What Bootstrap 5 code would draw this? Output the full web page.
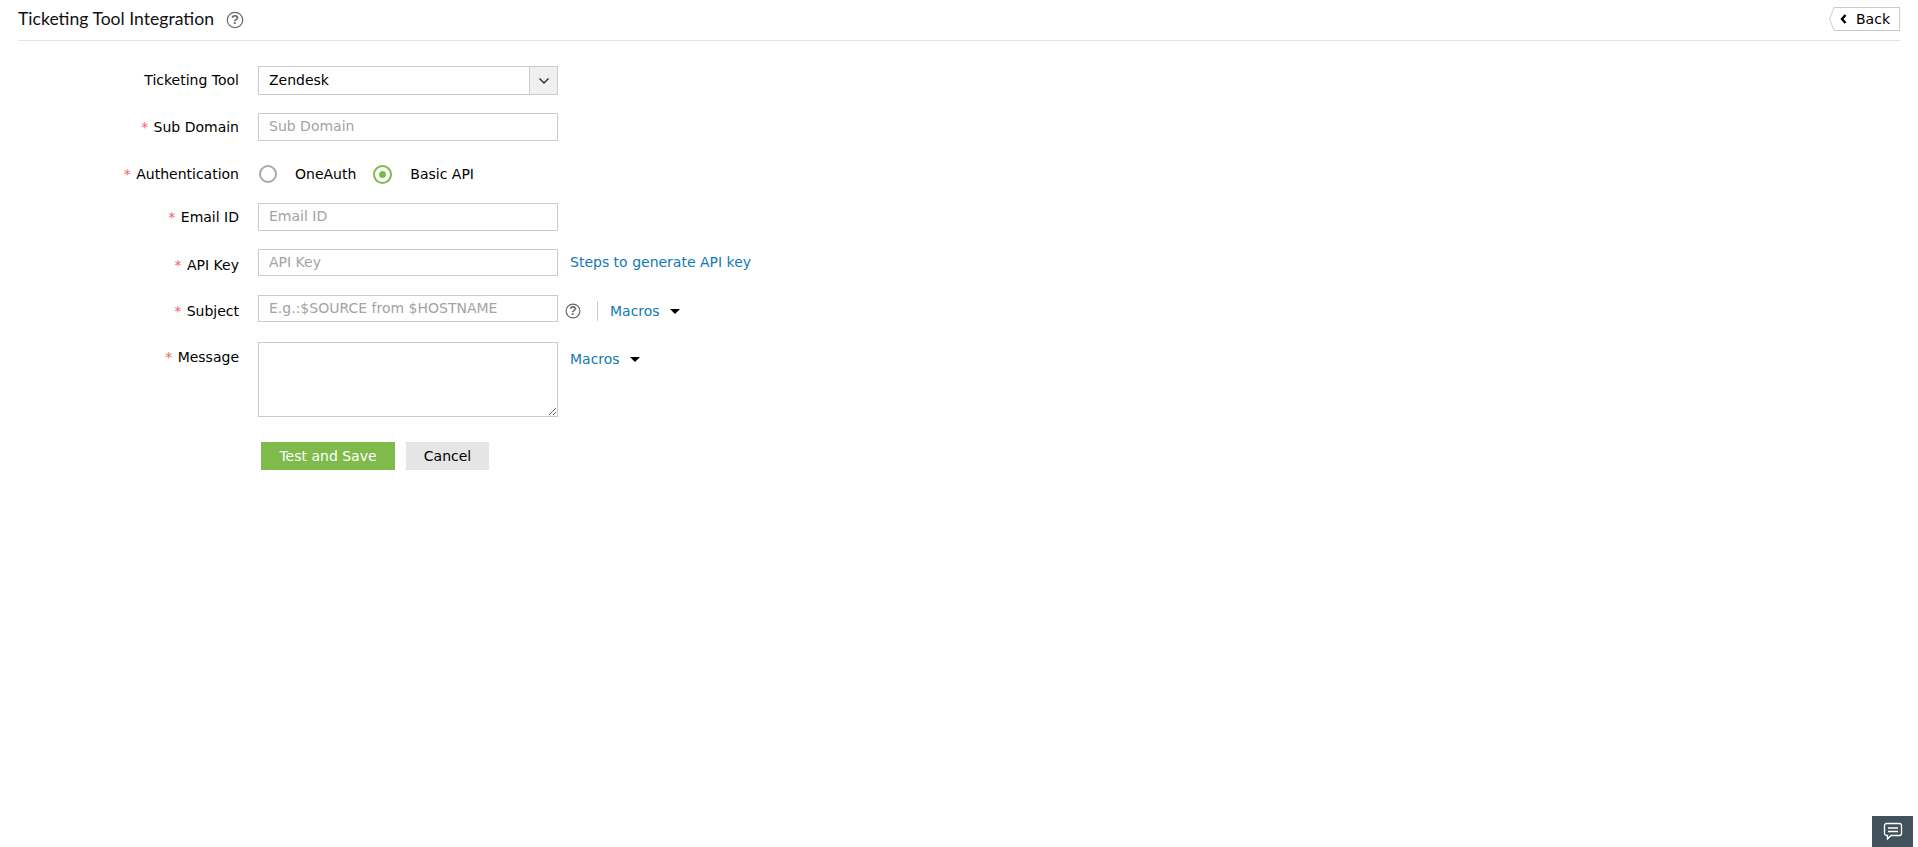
<!DOCTYPE html>
<html lang="en">
<head>
<meta charset="utf-8">
<title>Ticketing Tool Integration</title>
<link href="https://cdn.jsdelivr.net/npm/bootstrap@5.3.0/dist/css/bootstrap.min.css" rel="stylesheet">
<style>
html,body{height:100%;}
body{font-family:"DejaVu Sans",sans-serif;font-size:14px;color:#000;background:#fff;overflow:hidden;}
.page-wrap{padding:0 18px;height:847px;position:relative;}
.head-bar{height:41px;width:1882px;border-bottom:1px solid #e3e3e3;}
.head-title{font-family:Lato,sans-serif;font-size:17.6px;line-height:1;color:#111;margin-top:-3px;}
.help-ico{display:block;flex:none;}
.back-btn{position:relative;height:24px;width:66px;margin:-3px 0 0;border:1px solid #ccc;border-left:0;background:#fff;color:#000;font-size:14px;line-height:22px;padding:0 0 0 22px;border-radius:0;text-align:left;}
.back-btn .tip{position:absolute;left:-5px;top:-1px;}
.back-btn .chev{position:absolute;left:6px;top:6px;}
.form-zone{padding-top:25px;}
.frow{display:flex;align-items:flex-start;}
.frow.slim{height:27px;}
.flabel{width:221px;text-align:right;margin-right:19px;flex:none;line-height:27px;white-space:nowrap;padding-top:1px;}
.flabel.lower{line-height:26px;padding-top:3px;}
.flabel.mid{line-height:26px;padding-top:2px;}
.flabel i{color:#f0606a;font-style:normal;margin-right:1px;}
.ctl.form-control{width:300px;height:28px;flex:none;border:1.5px solid #ccc;border-radius:0;padding:0 10px 3px;font-size:14px;color:#000;box-shadow:none;}
.ctl.form-control.lean{height:27px;padding-bottom:2px;}
.ctl.form-control::placeholder{color:#a3a3a3;opacity:1;}
textarea.ctl.form-control{height:75px;padding:4px 10px;display:block;}
.sel-box{width:300px;height:29px;border:1.5px solid #ccc;display:flex;align-items:stretch;}
.sel-val{flex:1;padding-left:10px;line-height:27px;}
.sel-arrow{width:28px;background:#f0f0f0;border-left:1px solid #ccc;display:flex;align-items:center;justify-content:center;}
.radio-row{height:28px;display:flex;align-items:center;padding-left:1px;}
.radio-dot{width:18px;height:18px;border-radius:50%;border:2px solid #a9a9a9;display:inline-block;flex:none;}
.radio-dot.on{width:19px;height:19px;border-color:#7fbb4a;position:relative;}
.radio-dot.on::after{content:"";position:absolute;left:4px;top:4px;width:7px;height:7px;background:#7fbb4a;border-radius:50%;}
.tl{color:#1279b8;text-decoration:none;white-space:nowrap;}
.caret-ico{width:0;height:0;border-left:5px solid transparent;border-right:5px solid transparent;border-top:5px solid #000;display:inline-block;}
.vsep{width:1px;height:20px;background:#ccc;display:inline-block;}
.btn-save.btn{background:#7fbb4a;border:0;border-radius:0;color:#fff;width:134px;height:28px;padding:0;font-size:14px;}
.btn-cancel.btn{background:#e5e5e5;border:0;border-radius:0;color:#000;width:83px;height:28px;padding:0;font-size:14px;}
.chat-tab{position:absolute;right:5px;bottom:0;width:41px;height:31px;background:#42525c;display:flex;align-items:center;justify-content:center;}
</style>
</head>
<body>
<div class="page-wrap">
  <div class="head-bar d-flex align-items-center justify-content-between">
    <div class="d-flex align-items-center gap-2">
      <div class="head-title">Ticketing Tool Integration</div>
      <svg class="help-ico ms-1" width="18" height="18" viewBox="0 0 18 18" style="margin-top:-1px"><circle cx="9" cy="9" r="7.7" fill="none" stroke="#666" stroke-width="1.2"/><text x="9" y="13.400" text-anchor="middle" font-family="Liberation Sans" font-size="13" font-weight="700" fill="#666">?</text></svg>
    </div>
    <button type="button" class="btn back-btn">
      <svg class="tip" width="6" height="24" viewBox="0 0 6 24"><path d="M6 .5H5L.6 12 5 23.5h1" fill="#fff" stroke="#ccc"/></svg>
      <svg class="chev" width="7" height="10" viewBox="0 0 7 10"><path d="M5.500 1 2 5l3.500 4" fill="none" stroke="#000" stroke-width="2.400"/></svg>
      Back
    </button>
  </div>
  <form class="form-zone" onsubmit="return false">
    <div class="frow" style="margin-bottom:18px">
      <label class="flabel">Ticketing Tool</label>
      <div class="sel-box"><span class="sel-val">Zendesk</span><span class="sel-arrow"><svg width="12" height="8" viewBox="0 0 12 8"><path d="M1.500 1.500 6 6l4.500-4.500" fill="none" stroke="#333" stroke-width="1.500"/></svg></span></div>
    </div>
    <div class="frow" style="margin-bottom:19px">
      <label class="flabel"><i>*</i> Sub Domain</label>
      <input class="form-control ctl" placeholder="Sub Domain">
    </div>
    <div class="frow" style="margin-bottom:15px">
      <label class="flabel"><i>*</i> Authentication</label>
      <div class="radio-row">
        <span class="radio-dot"></span><span style="margin-left:18px">OneAuth</span>
        <span class="radio-dot on" style="margin-left:17px"></span><span style="margin-left:18px">Basic API</span>
      </div>
    </div>
    <div class="frow" style="margin-bottom:18px">
      <label class="flabel"><i>*</i> Email ID</label>
      <input class="form-control ctl" placeholder="Email ID">
    </div>
    <div class="frow slim" style="margin-bottom:19px">
      <label class="flabel lower"><i>*</i> API Key</label>
      <input class="form-control ctl lean" placeholder="API Key">
      <a class="tl" href="#" style="margin-left:12px;line-height:27px">Steps to generate API key</a>
    </div>
    <div class="frow slim" style="margin-bottom:20px">
      <label class="flabel lower"><i>*</i> Subject</label>
      <input class="form-control ctl lean" placeholder="E.g.:$SOURCE from $HOSTNAME">
      <div class="d-flex align-items-center" style="height:28px;margin-top:2px">
        <svg class="help-ico" style="margin-left:7px" width="16" height="16" viewBox="0 0 16 16"><circle cx="8" cy="8" r="6.9" fill="none" stroke="#666" stroke-width="1.200"/><text x="8" y="12" text-anchor="middle" font-family="Liberation Sans" font-size="12" font-weight="700" fill="#666">?</text></svg>
        <span class="vsep" style="margin-left:16px"></span>
        <a class="tl" href="#" style="margin-left:12px">Macros</a>
        <span class="caret-ico" style="margin-left:10px"></span>
      </div>
    </div>
    <div class="frow" style="margin-bottom:25px">
      <label class="flabel mid"><i>*</i> Message</label>
      <textarea class="form-control ctl"></textarea>
      <div class="d-flex align-items-center" style="height:28px;margin-left:12px;margin-top:3px">
        <a class="tl" href="#">Macros</a>
        <span class="caret-ico" style="margin-left:10px"></span>
      </div>
    </div>
    <div class="d-flex" style="padding-left:243px;gap:11px">
      <button type="button" class="btn btn-save">Test and Save</button>
      <button type="button" class="btn btn-cancel">Cancel</button>
    </div>
  </form>
  <div class="chat-tab"><svg width="20" height="19" viewBox="0 0 20 19"><path d="M3.500 1.500h13a2 2 0 0 1 2 2v8a2 2 0 0 1-2 2H8l-3.500 3.500v-3.500h-1a2 2 0 0 1-2-2v-8a2 2 0 0 1 2-2Z" fill="none" stroke="#fff" stroke-width="1.300"/><path d="M5 6h10M5 9.500h10" stroke="#fff" stroke-width="1.300"/></svg></div>
</div>
<script src="https://cdn.jsdelivr.net/npm/bootstrap@5.3.0/dist/js/bootstrap.bundle.min.js"></script>
</body>
</html>
